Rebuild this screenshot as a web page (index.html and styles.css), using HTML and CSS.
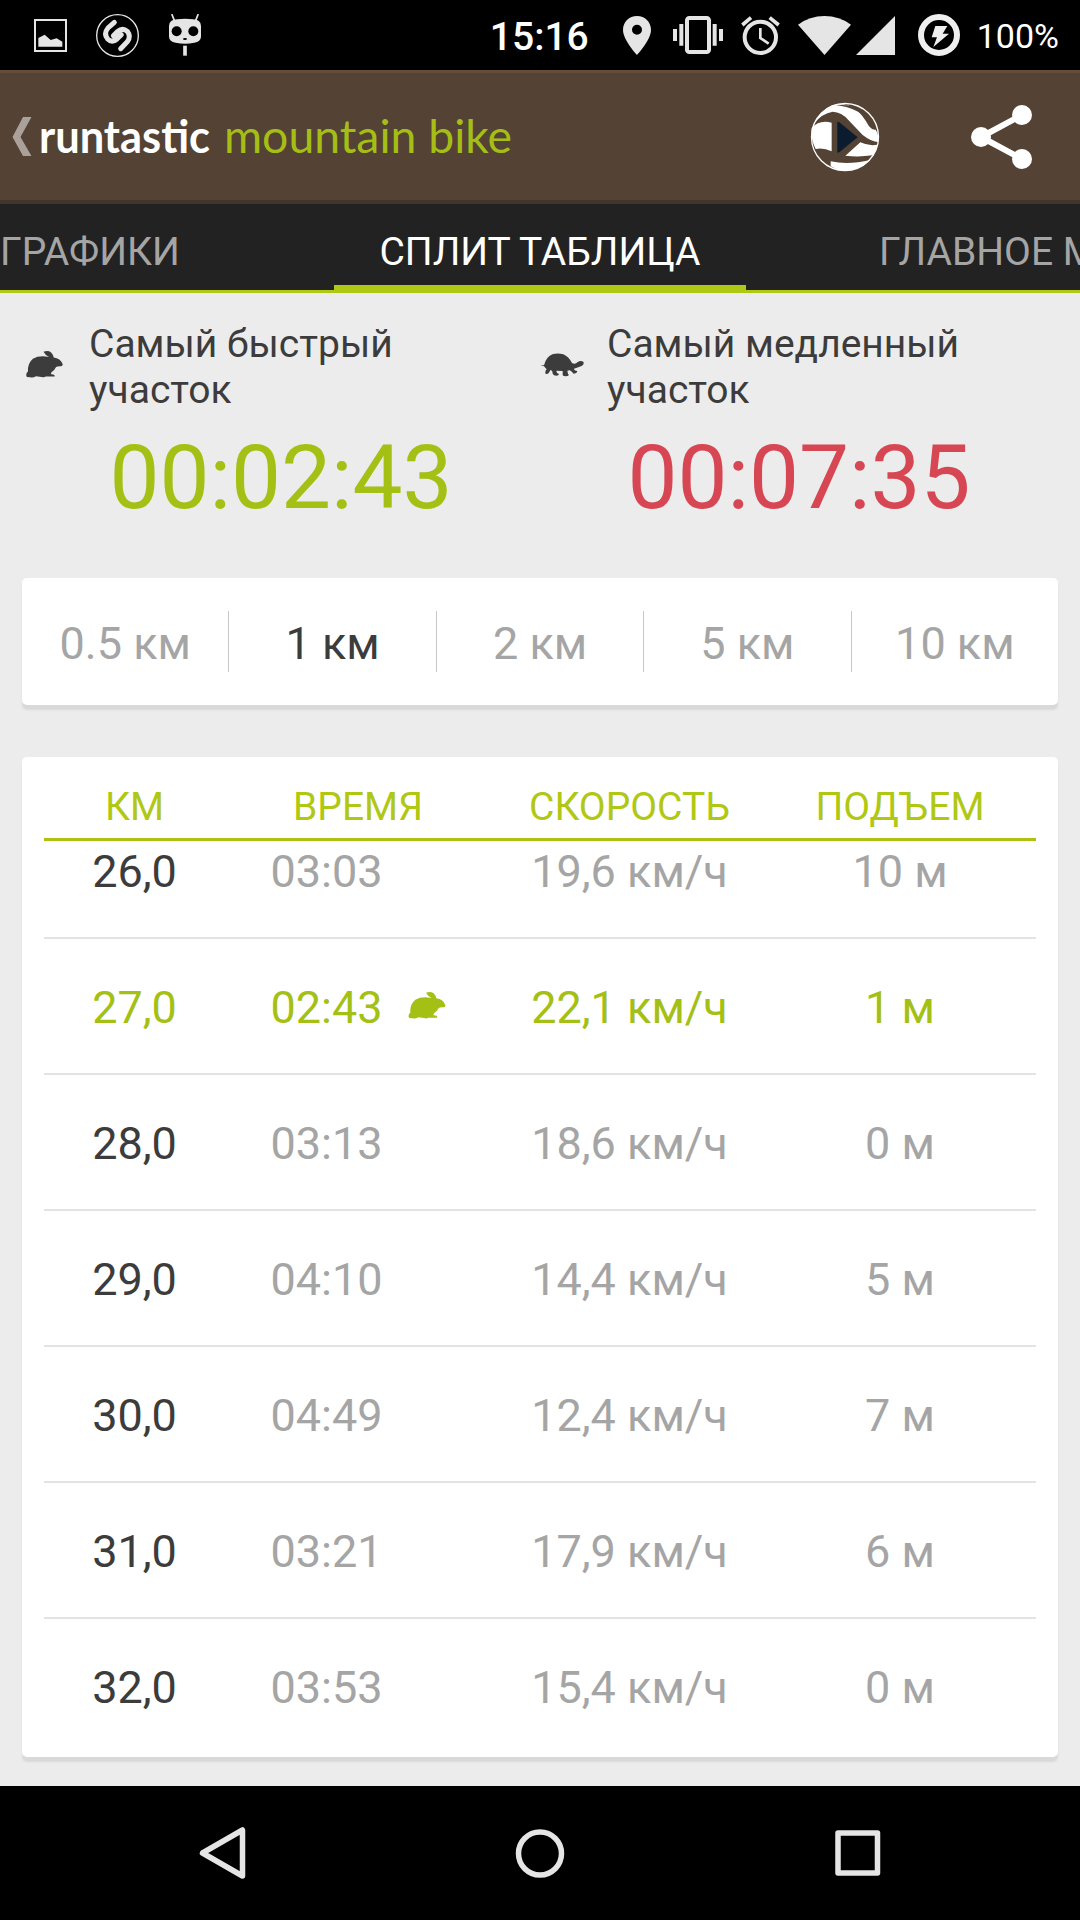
FILE: index.html
```
<!DOCTYPE html>
<html lang="ru">

<head>
  <meta charset="UTF-8">
  <meta name="viewport" content="width=device-width, initial-scale=1">
  <title>Runtastic Mountain Bike</title>

  <link rel="stylesheet" href="styles.css">
</head>

<body>
  <svg class="sprite" width="0" height="0">
    <symbol id="rabbit" viewBox="0 0 112 84">
      <path d="M3 81 Q0 80 1 73 Q2 67 6 65 Q4 40 21 26 Q38 16 66 20 L70 21 Q57 14 53 5 Q67 0 76 7 Q82 13 84 22 Q104 24 111 42 Q112 49 102 49 Q95 49 91 51 Q86 62 77 67 L75 73 Q87 72 87 80 L60 80 Q55 84 47 81 L30 79 Q22 84 13 82 Z"/>
    </symbol>
    <symbol id="turtle" viewBox="0 0 132 72">
      <path d="M1 37 L12 37 Q18 12 37 4 Q54 -1 70 4 Q86 11 96 30 Q106 35 113 27 Q124 21 131 28 Q132 39 119 41 L102 47 Q102 53 112 54 L109 60 L101 62 Q93 53 89 52 L82 53 Q83 63 87 66 Q82 71 73 69 Q70 70 68 66 L68 54 L49 53 Q49 61 57 63 Q56 70 42 67 Q36 62 37 54 L31 51 Q28 59 24 62 L17 63 Q14 54 20 49 L12 40 Z"/>
    </symbol>
  </svg>

  <div class="status">
    <div class="status_left">
      <svg width="33" height="33" viewBox="0 0 99 99">
        <rect x="3" y="3" width="93" height="93" fill="none" stroke="#e5e5e5" stroke-width="6"/>
        <path d="M13 83 V57 L32 47 L50 63 L68 58 L85 68 V83 Z" fill="#e5e5e5"/>
      </svg>
      <svg class="shazam" width="43" height="43" viewBox="0 0 129 129">
        <circle cx="64.500" cy="64.500" r="62.500" fill="none" stroke="#e5e5e5" stroke-width="4"/>
        <path d="M55 25 L36 42 Q22 59 35 75 Q48 88 63 75 L76 62 M52 65 L65 52 Q80 40 94 52 Q106 67 94 83 L74 104" fill="none" stroke="#e5e5e5" stroke-width="15" stroke-linecap="round"/>
      </svg>
      <svg class="cid" width="32" height="42" viewBox="0 0 96 126">
        <path d="M9 2 L17 22 M87 2 L79 22" stroke="#e5e5e5" stroke-width="5" stroke-linecap="round"/>
        <path d="M0 36 Q1 16 24 16 Q48 12 72 16 Q95 16 96 36 V68 Q95 83 76 86 Q48 92 20 86 Q1 83 0 68 Z" fill="#e5e5e5"/>
        <circle cx="23" cy="52" r="15"/>
        <circle cx="73" cy="52" r="15"/>
        <ellipse cx="48" cy="75" rx="6" ry="3"/>
        <path d="M48 95 V125" stroke="#e5e5e5" stroke-width="11"/>
      </svg>
    </div>
    <div class="status_right">
      <span class="clock">15:16</span>
      <svg class="pin" width="28" height="39" viewBox="0 0 84 117">
        <path d="M42 0 C18 0 0 18 0 42 C0 72 42 117 42 117 C42 117 84 72 84 42 C84 18 66 0 42 0 Z M42 26 A15 15 0 1 1 42 56 A15 15 0 1 1 42 26 Z" fill="#e5e5e5" fill-rule="evenodd"/>
      </svg>
      <svg class="vibrate" width="50" height="38" viewBox="0 0 150 114">
        <path d="M6 39 V75 M25 24 V89 M125 24 V89 M144 39 V75" stroke="#e5e5e5" stroke-width="12"/>
        <rect x="42" y="6" width="66" height="102" rx="7" fill="none" stroke="#e5e5e5" stroke-width="12"/>
      </svg>
      <svg class="alarm" width="39" height="39" viewBox="0 0 117 117">
        <circle cx="58" cy="64" r="47" fill="none" stroke="#e5e5e5" stroke-width="12"/>
        <path d="M4 27 L30 5 M86 5 L113 27" stroke="#e5e5e5" stroke-width="11"/>
        <path d="M58 36 V66 L83 83" fill="none" stroke="#e5e5e5" stroke-width="8"/>
      </svg>
      <svg class="wifi" width="53" height="39" viewBox="0 0 159 117">
        <path d="M0 26 Q35 0 79.500 0 Q124 0 159 26 L79.500 117 Z" fill="#e5e5e5"/>
      </svg>
      <svg class="cell" width="39" height="39" viewBox="0 0 117 117">
        <path d="M117 0 V117 H0 Z" fill="#e5e5e5"/>
      </svg>
      <svg class="battery" width="42" height="42" viewBox="0 0 126 126">
        <circle cx="63" cy="63" r="54" fill="none" stroke="#efefef" stroke-width="18"/>
        <path d="M52 36 H88 L74 59 H93 L46 99 L57 70 H41 Z" fill="#efefef"/>
      </svg>
      <span class="percent">100%</span>
    </div>
  </div>

  <div class="header">
    <svg class="back" width="20" height="40" viewBox="0 0 20 40">
      <path d="M11 0 H19.500 L8.500 20 L19.500 39 H11 L0.500 20 Z" fill="#aaa19a"/>
    </svg>
    <svg class="logo" width="480" height="60" viewBox="0 0 480 60">
      <text class="logo_brand" x="0" y="46" textLength="171" lengthAdjust="spacingAndGlyphs">runtastic</text>
      <text class="logo_app" x="185" y="46" textLength="288" lengthAdjust="spacingAndGlyphs">mountain bike</text>
    </svg>
    <svg class="globe" width="70" height="70" viewBox="0 0 210 210">
      <circle cx="105" cy="105" r="100.500" fill="none" stroke="#fff" stroke-width="4"/>
      <path d="M14 63 Q32 24 68 10 Q105 0 138 22 Q158 39 177 73 Q187 85 197 83 Q207 98 205 120 Q185 120 158 99 L115 54 Q95 30 68 29 Q35 35 14 63 Z" fill="#fff"/>
      <path d="M78 10 Q120 4 150 25 Q184 46 194 79 Q186 73 174 55 Q144 17 78 10 Z" fill="#544235"/>
      <path d="M5 78 Q28 52 65 62 V148 Q40 136 17 141 Q2 115 5 78 Z" fill="#fff"/>
      <path d="M106 161 L151 121 Q177 133 202 128 Q199 147 188 160 Q145 166 106 161 Z" fill="#fff"/>
      <path d="M62 178 Q115 190 181 174 Q140 214 84 203 L62 193 Z" fill="#fff"/>
      <path d="M82 60 Q84 58 88 61 L143 106 L88 151 Q82 154 82 149 Z" fill="#0b1c2f"/>
    </svg>
    <svg class="share" width="62" height="64" viewBox="0 0 62 64">
      <path d="M51 10 L10 32 L51 54" fill="none" stroke="#fff" stroke-width="6"/>
      <circle cx="51" cy="10" r="10" fill="#fff"/>
      <circle cx="10" cy="32" r="10" fill="#fff"/>
      <circle cx="51" cy="54" r="10" fill="#fff"/>
    </svg>
  </div>

  <div class="tabs">
    <div class="tab tab_prev">ГРАФИКИ</div>
    <div class="tab tab_active">СПЛИТ ТАБЛИЦА</div>
    <div class="tab tab_next">ГЛАВНОЕ М</div>
  </div>

  <div class="content">
    <div class="summary">
      <div class="best">
        <div class="best_label">
          <svg class="best_rabbit"><use href="#rabbit"/></svg>
          <p>Самый быстрый<br>участок</p>
        </div>
        <p class="best_time green">00:02:43</p>
      </div>
      <div class="best">
        <div class="best_label">
          <svg class="best_turtle"><use href="#turtle"/></svg>
          <p>Самый медленный<br>участок</p>
        </div>
        <p class="best_time red">00:07:35</p>
      </div>
    </div>

    <div class="card distances">
      <div class="distance">0.5 км</div>
      <div class="distance selected">1 км</div>
      <div class="distance">2 км</div>
      <div class="distance">5 км</div>
      <div class="distance">10 км</div>
    </div>

    <div class="card splits">
      <div class="row row_head">
        <span>КМ</span><span>ВРЕМЯ</span><span>СКОРОСТЬ</span><span>ПОДЪЕМ</span>
      </div>
      <!-- list is scrolled, first row is partly under the head -->
      <div class="list">
        <div class="row">
          <span class="km">26,0</span>
          <span class="time">03:03<i class="mark"></i></span>
          <span>19,6 км/ч</span>
          <span>10 м</span>
        </div>
        <div class="row fastest">
          <span class="km">27,0</span>
          <span class="time">02:43<svg class="mark"><use href="#rabbit"/></svg></span>
          <span>22,1 км/ч</span>
          <span>1 м</span>
        </div>
        <div class="row">
          <span class="km">28,0</span>
          <span class="time">03:13<i class="mark"></i></span>
          <span>18,6 км/ч</span>
          <span>0 м</span>
        </div>
        <div class="row">
          <span class="km">29,0</span>
          <span class="time">04:10<i class="mark"></i></span>
          <span>14,4 км/ч</span>
          <span>5 м</span>
        </div>
        <div class="row">
          <span class="km">30,0</span>
          <span class="time">04:49<i class="mark"></i></span>
          <span>12,4 км/ч</span>
          <span>7 м</span>
        </div>
        <div class="row">
          <span class="km">31,0</span>
          <span class="time">03:21<i class="mark"></i></span>
          <span>17,9 км/ч</span>
          <span>6 м</span>
        </div>
        <div class="row">
          <span class="km">32,0</span>
          <span class="time">03:53<i class="mark"></i></span>
          <span>15,4 км/ч</span>
          <span>0 м</span>
        </div>
      </div>
    </div>
  </div>

  <div class="nav">
    <svg width="52" height="54" viewBox="0 0 52 54">
      <path d="M46.500 4 V50 L6.500 27 Z"/>
    </svg>
    <svg width="52" height="54" viewBox="0 0 52 54">
      <circle cx="26" cy="27.500" r="21.500"/>
    </svg>
    <svg width="52" height="54" viewBox="0 0 52 54">
      <rect x="6" y="7" width="39.500" height="40"/>
    </svg>
  </div>
</body>

</html>
```
FILE: styles.css
```
* {
  margin: 0;
  padding: 0;
  box-sizing: border-box;
}

body {
  display: flex;
  flex-direction: column;
  width: 1080px;
  height: 1920px;
  overflow: hidden;
  background-color: #ececec;
  font-family: Roboto, "Liberation Sans", sans-serif;
}

svg {
  display: block;
  flex-shrink: 0;
}

.sprite {
  display: none;
}

/* status bar */

.status {
  display: flex;
  justify-content: space-between;
  height: 70px;
  padding: 0 21px 0 34px;
  background-color: #000;
  color: #fff;
}

.status_left,
.status_right {
  display: flex;
  align-items: center;
}

.shazam {
  margin-left: 29px;
}

.cid {
  margin-left: 30px;
}

.clock {
  font-size: 39px;
  font-weight: 500;
  line-height: 46px;
  margin-top: 4px;
}

.pin {
  margin-left: 34px;
}

.vibrate {
  margin-left: 22px;
}

.alarm {
  margin-left: 18px;
}

.wifi {
  margin-left: 18px;
}

.cell {
  margin-left: 5px;
}

.battery {
  margin-left: 23px;
}

.percent {
  margin-left: 17px;
  margin-top: 2px;
  font-size: 34px;
}

/* app header */

.header {
  display: flex;
  align-items: center;
  height: 134px;
  padding-left: 12px;
  background-color: #544235;
  border-top: 3px solid #644e3b;
  border-bottom: 4px solid #43352b;
}

.logo {
  margin-left: 7px;
}

.logo_brand,
.logo_app {
  font-family: Lato, sans-serif;
  font-size: 46px;
}

.logo_brand {
  font-weight: 700;
  fill: #fff;
}

.logo_app {
  fill: #a5be15;
}

.globe {
  margin-left: 291px;
}

.share {
  margin-left: 91px;
}

/* tabs */

.tabs {
  display: flex;
  height: 89px;
  background-color: #222;
  border-bottom: 3px solid #afc812;
  overflow: hidden;
}

.tab {
  height: 86px;
  line-height: 97px;
  font-size: 39px;
  white-space: nowrap;
  color: #a5a5a5;
}

.tab_prev {
  width: 334px;
}

.tab_active {
  width: 412px;
  text-align: center;
  color: #fff;
  border-bottom: 5px solid #afc812;
}

.tab_next {
  width: 334px;
  padding-left: 133px;
}

/* content */

.content {
  flex: 1;
  padding: 0 22px;
}

.summary {
  display: flex;
  height: 285px;
  padding-top: 28px;
}

.best {
  width: 518px;
}

.best_label {
  display: flex;
  align-items: center;
  height: 92px;
  font-size: 39px;
  line-height: 46px;
  color: #3c3c3c;
}

.best_label p {
  padding-left: 26px;
}

.best_rabbit {
  width: 37px;
  height: 28px;
  margin: 0 0 6px 4px;
  fill: #3c3c3c;
}

.best_turtle {
  width: 44px;
  height: 24px;
  margin: 0 -3px 4px 0;
  fill: #3c3c3c;
}

.best_time {
  margin-top: 12px;
  font-size: 89px;
  line-height: 106px;
  text-align: center;
}

.green {
  color: #a4c015;
}

.red {
  color: #d64753;
}

.card {
  background-color: #fff;
  border-radius: 5px;
  box-shadow: 0 5px 2px #d9d9d9;
}

.distances {
  display: flex;
  align-items: center;
  height: 127px;
}

.distance {
  flex: 1;
  height: 61px;
  line-height: 65px;
  font-size: 45px;
  text-align: center;
  color: #a5a5a5;
  border-left: 1px solid #c8c8c8;
}

.distance:first-child {
  border-left: none;
}

.selected {
  color: #3c3c3c;
}

/* split table */

.splits {
  height: 1000px;
  margin-top: 52px;
  padding: 0 22px;
}

.row {
  display: grid;
  grid-template-columns: 181px 266px 277px 264px;
  align-items: center;
  height: 136px;
  font-size: 45px;
  text-align: center;
  color: #a5a5a5;
  border-bottom: 2px solid #e3e3e3;
}

.row:last-child {
  border-bottom-color: transparent;
}

.row_head {
  height: 84px;
  padding-top: 19px;
  font-size: 39px;
  color: #b0c813;
  border-bottom: 3px solid #afc012;
}

.list {
  display: flex;
  flex-direction: column;
  justify-content: flex-end;
  height: 914px;
  overflow: hidden;
}

.list .row {
  flex-shrink: 0;
  padding-top: 3px;
}

.km {
  color: #3c3c3c;
}

.time {
  display: flex;
  justify-content: center;
  align-items: center;
}

.mark {
  width: 38px;
  height: 28px;
  margin: 0 0 6px 25px;
  fill: #a4c015;
}

.fastest,
.fastest .km {
  color: #a4c015;
}

/* navigation bar */

.nav {
  display: flex;
  justify-content: space-between;
  align-items: center;
  height: 134px;
  padding: 0 196px;
  background-color: #000;
}

.nav svg {
  fill: none;
  stroke: #e5e5e5;
  stroke-width: 5.500px;
  stroke-linejoin: round;
}
```
